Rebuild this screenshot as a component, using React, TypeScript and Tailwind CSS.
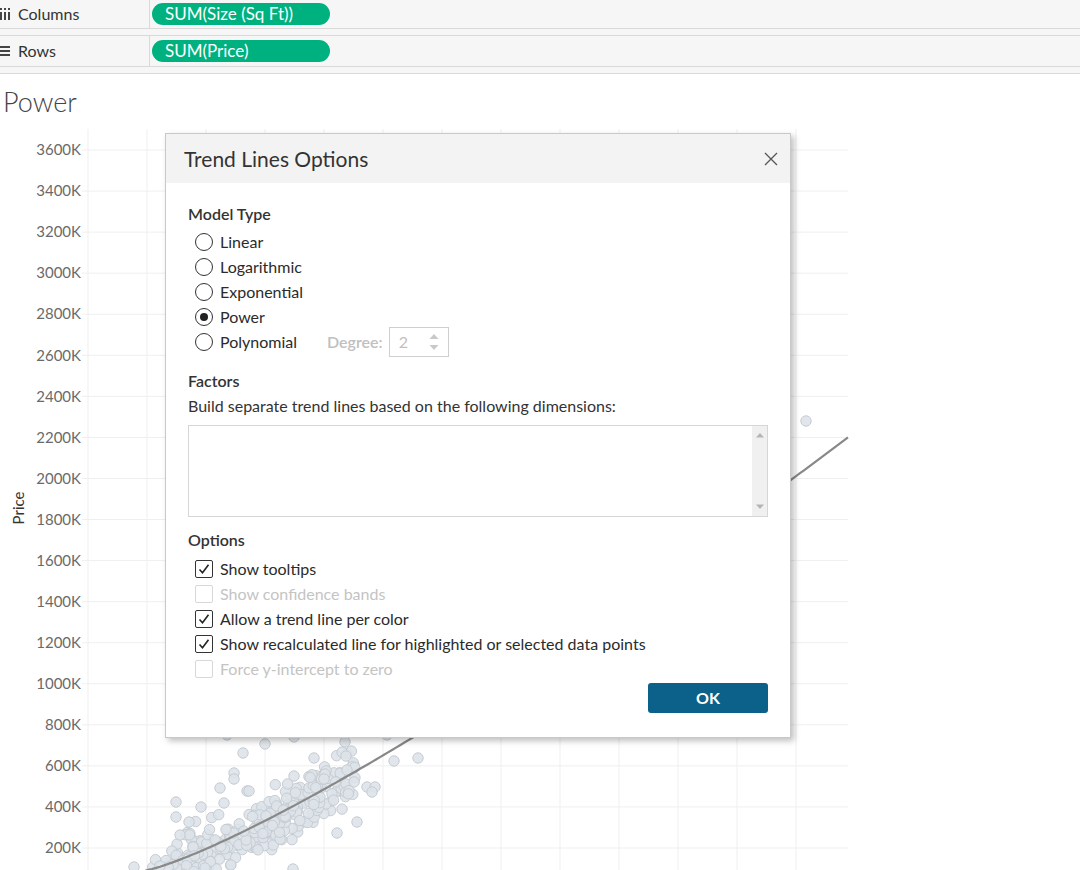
import React from 'react';

const yTicks = [3600, 3400, 3200, 3000, 2800, 2600, 2400, 2200, 2000, 1800, 1600, 1400, 1200, 1000, 800, 600, 400, 200];
const tickY = (i: number) => 150 + i * 41.06;
const xGrid = Array.from({ length: 13 }, (_, k) => 88 + k * 59);

// trend curve (power fit, page coords)
const curve = (x: number) => {
  if (x < 147) return 870 + 0.43 * (147 - x);
  return 870 - 0.146 * Math.pow(x - 147, 1.22);
};

function rng(seed: number) {
  let a = seed;
  return () => {
    a |= 0;
    a = (a + 0x6d2b79f5) | 0;
    let t = Math.imul(a ^ (a >>> 15), 1 | a);
    t = (t + Math.imul(t ^ (t >>> 7), 61 | t)) ^ t;
    return ((t ^ (t >>> 14)) >>> 0) / 4294967296;
  };
}

const outliers: [number, number][] = [
  [227, 735], [265, 744], [294, 737], [345, 742], [387, 735], [243, 753], [314, 758], [346, 756],
  [394, 761], [418, 758], [234, 773], [234, 779], [294, 776], [325, 774], [324, 779], [347, 770],
  [220, 788], [247, 791], [249, 791], [367, 787], [375, 787], [372, 792], [176, 802], [201, 807],
  [224, 803], [176, 817], [189, 822], [180, 835], [337, 833], [357, 822], [134, 867], [806, 421],
  [160, 866], [205, 868], [293, 869],
];

const cluster: [number, number][] = (() => {
  const r = rng(7);
  const pts: [number, number][] = [];
  for (let i = 0; i < 300; i++) {
    const x = 150 + 205 * Math.pow(r(), 0.85);
    const g = (r() + r() + r() - 1.5) * 2;
    const y = curve(x) + g * 13 + 2;
    pts.push([x, y]);
  }
  return pts;
})();

const points = [...cluster, ...outliers];

const trend = (() => {
  const seg: string[] = [];
  for (let x = 120; x <= 848; x += 4) seg.push(`${x},${curve(x).toFixed(1)}`);
  return seg.join(' ');
})();

const ColumnsIcon = () => (
  <svg width="11" height="12" viewBox="0 0 11 12">
    <rect x="0" y="0" width="2" height="2" fill="#444" />
    <rect x="4" y="0" width="2" height="2" fill="#444" />
    <rect x="8" y="0" width="2" height="2" fill="#444" />
    <rect x="0" y="4" width="2" height="8" fill="#444" />
    <rect x="4" y="4" width="2" height="8" fill="#444" />
    <rect x="8" y="4" width="2" height="8" fill="#444" />
  </svg>
);

const RowsIcon = () => (
  <svg width="11" height="10" viewBox="0 0 11 10">
    <rect x="0" y="0" width="10" height="2" fill="#444" />
    <rect x="0" y="4" width="10" height="2" fill="#444" />
    <rect x="0" y="8" width="10" height="2" fill="#444" />
  </svg>
);

function Shelf({ icon, label, pill, className }: { icon: React.ReactNode; label: string; pill: string; className: string }) {
  return (
    <div className={`flex border-[#d9d9d9] ${className}`}>
      <div className="w-[150px] border-r border-[#d9d9d9] flex items-center text-[16px] text-[#333]">
        <span className="w-[18px] flex items-center">{icon}</span>
        <span>{label}</span>
      </div>
      <div className="flex items-center pl-[2px]">
        <div className="h-[22px] w-[178px] rounded-full bg-[#00b180] text-white text-[17px] pl-[13px] flex items-center">
          {pill}
        </div>
      </div>
    </div>
  );
}

function Radio({ label, checked, extra }: { label: string; checked?: boolean; extra?: React.ReactNode }) {
  return (
    <div className="flex items-center h-[25px] pl-[7px]">
      <span className="w-[18px] h-[18px] rounded-full border border-[#333] flex items-center justify-center">
        {checked && <span className="w-[8px] h-[8px] rounded-full bg-[#222]" />}
      </span>
      <span className={`ml-[7px] text-[16px] text-[#2b2b2b] ${extra ? 'w-[107px]' : ''}`}>{label}</span>
      {extra}
    </div>
  );
}

function Check({ label, checked, disabled }: { label: string; checked?: boolean; disabled?: boolean }) {
  return (
    <div className="flex items-center h-[25px] pl-[7px]">
      <span
        className={`w-[18px] h-[18px] rounded-[2px] border flex items-center justify-center ${
          disabled ? 'border-[#d8d8d8]' : 'border-[#333]'
        }`}
      >
        {checked && (
          <svg width="14" height="14" viewBox="0 0 14 14">
            <path d="M2.5 7.5 L5.5 10.8 L11.5 2.8" fill="none" stroke="#222" strokeWidth="1.6" />
          </svg>
        )}
      </span>
      <span className={`ml-[7px] text-[16px] ${disabled ? 'text-[#c4c4c4]' : 'text-[#2b2b2b]'}`}>{label}</span>
    </div>
  );
}

function Degree() {
  return (
    <div className="flex items-center">
      <span className="text-[16px] text-[#c0c0c0] font-semibold">Degree:</span>
      <div className="ml-[6px] w-[60px] h-[30px] border border-[#cfcfcf] flex items-center justify-between pl-[9px] pr-[8px]">
        <span className="text-[16px] text-[#c0c0c0]">2</span>
        <svg width="12" height="20" viewBox="0 0 12 20">
          <path d="M1.5 7 L6 2 L10.5 7 Z" fill="#c9c9c9" />
          <path d="M1.5 13 L6 18 L10.5 13 Z" fill="#c9c9c9" />
        </svg>
      </div>
    </div>
  );
}

function Dialog() {
  return (
    <div className="absolute left-[165px] top-[15px] w-[626px] h-[605px] bg-white border border-[#c9c9c9] shadow-[3px_3px_6px_rgba(0,0,0,0.25)] flex flex-col">
      <div className="h-[49px] bg-[#f3f3f3] flex items-center justify-between pl-[18px] pr-[12px] shrink-0">
        <span className="text-[21px] text-[#333]">Trend Lines Options</span>
        <svg width="14" height="14" viewBox="0 0 14 14">
          <path d="M1 1 L13 13 M13 1 L1 13" stroke="#555" strokeWidth="1.3" />
        </svg>
      </div>
      <div className="px-[22px] pt-[21px] flex flex-col">
        <div className="text-[16px] leading-[20px] font-semibold text-[#333]">Model Type</div>
        <div className="mt-[5px] flex flex-col">
          <Radio label="Linear" />
          <Radio label="Logarithmic" />
          <Radio label="Exponential" />
          <Radio label="Power" checked />
          <Radio label="Polynomial" extra={<Degree />} />
        </div>
        <div className="mt-[17px] text-[16px] leading-[20px] font-semibold text-[#333]">Factors</div>
        <div className="mt-[5px] text-[16px] leading-[20px] text-[#333]">Build separate trend lines based on the following dimensions:</div>
        <div className="mt-[9px] h-[92px] border border-[#d6d6d6] flex justify-end">
          <div className="w-[15px] bg-[#f0f0f0] flex flex-col justify-between items-center py-[6px]">
            <svg width="8" height="6" viewBox="0 0 8 6"><path d="M0 5.5 L4 1 L8 5.5 Z" fill="#b5b5b5" /></svg>
            <svg width="8" height="6" viewBox="0 0 8 6"><path d="M0 0.5 L4 5 L8 0.5 Z" fill="#b5b5b5" /></svg>
          </div>
        </div>
        <div className="mt-[13px] text-[16px] leading-[20px] font-semibold text-[#333]">Options</div>
        <div className="mt-[6px] flex flex-col">
          <Check label="Show tooltips" checked />
          <Check label="Show confidence bands" disabled />
          <Check label="Allow a trend line per color" checked />
          <Check label="Show recalculated line for highlighted or selected data points" checked />
          <Check label="Force y-intercept to zero" disabled />
        </div>
        <div className="mt-[2px] flex justify-end">
          <button className="w-[120px] h-[30px] rounded-[3px] bg-[#0b6189] text-white font-bold text-[16px]">OK</button>
        </div>
      </div>
    </div>
  );
}

export default function App() {
  return (
    <div className="w-[1080px] h-[870px] overflow-hidden bg-white font-['Lato','Liberation_Sans',sans-serif]">
      <div className="bg-[#f6f6f6]">
        <Shelf icon={<ColumnsIcon />} label="Columns" pill="SUM(Size (Sq Ft))" className="h-[29px] border-b" />
        <div className="h-[6px]" />
        <Shelf icon={<RowsIcon />} label="Rows" pill="SUM(Price)" className="h-[32px] border-t border-b" />
        <div className="h-[7px] border-b border-[#d9d9d9]" />
      </div>
      <div className="pt-[11px] pl-[3px] text-[27px] leading-[33px] font-light text-[#444]">Power</div>
      <div className="relative">
        <svg width="1080" height="752" viewBox="0 118 1080 752" className="block">
          {xGrid.map((x) => (
            <line key={x} x1={x} y1={129} x2={x} y2={870} stroke="#efefef" strokeWidth="1" />
          ))}
          {yTicks.map((v, i) => (
            <g key={v}>
              <line x1={82} y1={tickY(i)} x2={848} y2={tickY(i)} stroke="#efefef" strokeWidth="1" />
              <text x={81} y={tickY(i)} dy="0.35em" textAnchor="end" fontSize="15" fill="#6a6a6a">
                {v}K
              </text>
            </g>
          ))}
          <text transform="translate(24 508) rotate(-90)" textAnchor="middle" fontSize="15" fill="#333">
            Price
          </text>
          {points.map(([x, y], i) => (
            <circle key={i} cx={x} cy={y} r="5.2" fill="#dde3e9" fillOpacity="0.9" stroke="#c6ccd3" strokeWidth="1" />
          ))}
          <polyline points={trend} fill="none" stroke="#888" strokeWidth="2.2" />
        </svg>
        <Dialog />
      </div>
    </div>
  );
}
